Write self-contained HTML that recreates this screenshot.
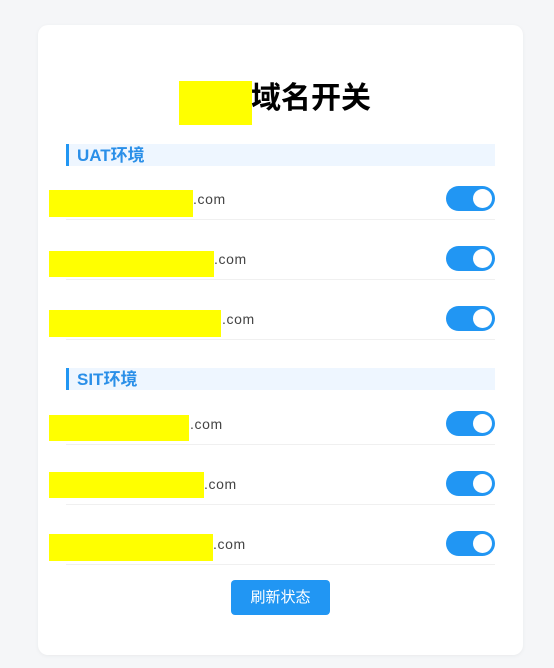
<!DOCTYPE html><html><head><meta charset="utf-8"><style>
body{margin:0;width:554px;height:668px;background:#f5f6f8;font-family:"Liberation Sans","Noto Sans CJK SC",sans-serif;position:relative;overflow:hidden}
.a{position:absolute}
.card{left:38px;top:25px;width:485px;height:630px;background:#fff;border-radius:10px;box-shadow:0 1px 4px rgba(0,0,0,.05)}
.y{background:#ff0;position:absolute}
.hd{left:66px;width:429px;height:22px;background:#eef6ff;border-left:3px solid #2196f3;box-sizing:border-box;color:#2a8fe8;font-weight:bold;font-size:17px;line-height:24px;padding-left:8px}
.ln{left:66px;width:429px;height:1px;background:#f0f0f0}
.t{font-size:14px;color:#444;letter-spacing:.6px;line-height:20px}
.tg{left:446px;width:49px;height:25px;border-radius:13px;background:#2196f3}
.tg:after{content:"";position:absolute;right:3px;top:3px;width:19px;height:19px;border-radius:50%;background:#fff}
</style></head><body>
<div class="a card"></div>
<div class="y" style="left:179px;top:81px;width:73px;height:44px"></div>
<div class="a" style="left:251px;top:79px;font-size:30px;font-weight:bold;line-height:40px;color:#000">域名开关</div>

<div class="a hd" style="top:144px">UAT环境</div>
<div class="y" style="left:49px;top:190px;width:144px;height:27px"></div><div class="a t" style="left:193px;top:189px">.com</div><div class="a tg" style="top:186px"></div><div class="a ln" style="top:219px"></div>
<div class="y" style="left:49px;top:251px;width:165px;height:26px"></div><div class="a t" style="left:214px;top:249px">.com</div><div class="a tg" style="top:246px"></div><div class="a ln" style="top:279px"></div>
<div class="y" style="left:49px;top:310px;width:172px;height:27px"></div><div class="a t" style="left:222px;top:309px">.com</div><div class="a tg" style="top:306px"></div><div class="a ln" style="top:339px"></div>

<div class="a hd" style="top:368px">SIT环境</div>
<div class="y" style="left:49px;top:415px;width:140px;height:26px"></div><div class="a t" style="left:190px;top:414px">.com</div><div class="a tg" style="top:411px"></div><div class="a ln" style="top:444px"></div>
<div class="y" style="left:49px;top:472px;width:155px;height:26px"></div><div class="a t" style="left:204px;top:474px">.com</div><div class="a tg" style="top:471px"></div><div class="a ln" style="top:504px"></div>
<div class="y" style="left:49px;top:534px;width:164px;height:27px"></div><div class="a t" style="left:213px;top:534px">.com</div><div class="a tg" style="top:531px"></div><div class="a ln" style="top:564px"></div>

<div class="a" style="left:231px;top:580px;width:99px;height:35px;background:#2196f3;border-radius:4px;color:#fff;font-size:15px;line-height:36px;text-align:center">刷新状态</div>
</body></html>
